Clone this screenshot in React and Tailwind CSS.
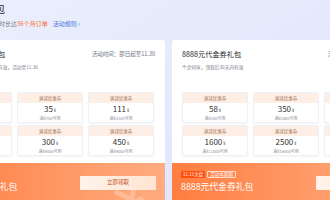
import React from 'react';

const cards = [
  {
    title: '3888元代金券礼包',
    desc: '个企同享，领取后30天内有效，活动至11.30',
    coupons: [
      { v: '15', min: '满¥300可用' },
      { v: '35', min: '满¥780可用' },
      { v: '111', min: '满¥2220可用' },
      { v: '150', min: '满¥3000可用' },
      { v: '300', min: '满¥6000可用' },
      { v: '450', min: '满¥9000可用' },
    ],
  },
  {
    title: '8888元代金券礼包',
    desc: '个企同享，领取后30天内有效',
    coupons: [
      { v: '58', min: '满¥300可用' },
      { v: '350', min: '满¥2400可用' },
      { v: '800', min: '满¥4800可用' },
      { v: '1600', min: '满¥11000可用' },
      { v: '2500', min: '满¥16800可用' },
      { v: '3500', min: '满¥23000可用' },
    ],
  },
];

const Coupon = ({ v, min }) => (
  <div className="flex flex-col overflow-hidden rounded-[2px] border border-[#eef0f5] bg-white shadow-[0_1px_2px_rgba(60,80,140,0.06)]">
    <div className="flex h-[10px] items-center justify-center bg-[#fdefe5] text-[4.5px] leading-none text-[#a8765a]">
      满减优惠券
    </div>
    <div className="flex h-[19px] flex-col items-center justify-center">
      <div className="flex items-baseline leading-none text-[#333]">
        <span className="text-[8px]">{v}</span>
        <span className="ml-[1px] text-[4px]">¥</span>
      </div>
      <div className="mt-[2.5px] text-[4px] leading-none text-[#8a8f99]">{min}</div>
    </div>
  </div>
);

const Card = ({ title, desc, coupons }) => (
  <div className="flex w-[229px] shrink-0 flex-col overflow-hidden rounded-[3px] bg-white">
    <div className="flex flex-col px-[10px] pt-[10px]">
      <div className="flex items-center justify-between">
        <span className="text-[7.2px] leading-[9px] text-[#1f2329]">{title}</span>
        <span className="text-[5.5px] leading-[9px] text-[#6b7280]">活动时间：即日起至11.30</span>
      </div>
      <div className="mt-[5px] text-[4.7px] leading-[6px] text-[#7a808a]">{desc}</div>
      <div className="mt-[22px] grid w-[208px] grid-cols-3 gap-x-[5px] gap-y-[2px]">
        {coupons.map((c) => (
          <Coupon key={c.v} {...c} />
        ))}
      </div>
    </div>
    <div className="relative mt-[7px] flex h-[42px] items-start justify-between overflow-hidden bg-gradient-to-r from-[#ff7d3f] to-[#ffac80] px-[9px] pt-[8px]">
      <svg className="absolute left-[176px] top-[18px] opacity-25" width="40" height="40" viewBox="0 0 40 40">
        <g transform="rotate(-25 20 20)" fill="none" stroke="#fff" strokeWidth="5" strokeLinecap="round">
          <path d="M10 6 L20 18 L30 6" />
          <path d="M20 18 V36" />
          <path d="M11 22 H29" />
          <path d="M11 30 H29" />
        </g>
      </svg>
      <div className="relative flex flex-col">
        <div className="flex items-center gap-[2px]">
          <span className="flex h-[7px] items-center rounded-[1px] bg-[#ff4f0f] px-[2px] text-[4.5px] leading-none text-white">11.11大促</span>
          <span className="flex h-[7px] items-center rounded-[1px] border border-white/70 px-[2px] text-[4.5px] leading-none text-white">活动本周期</span>
        </div>
        <div className="mt-[4px] text-[8.8px] leading-[10px] text-white">{title}</div>
      </div>
      <button className="relative mt-[5px] flex h-[14px] w-[76px] items-center justify-center rounded-[1px] bg-gradient-to-r from-[#fff3ea] to-[#ffe4d2] text-[5.5px] leading-none text-[#c4552a]">
        立即领取
      </button>
    </div>
  </div>
);

export default function App() {
  return (
    <div
      className="h-[200px] w-[330px] overflow-hidden bg-gradient-to-br from-[#eaeefc] to-[#dfe6fb]"
      style={{ fontFamily: '"Noto Sans CJK SC", "Noto Sans", sans-serif' }}
    >
      <div className="-ml-[37px] flex flex-col pt-[3px]">
        <div className="text-[10.5px] leading-[11px] text-[#1f2329]">专享礼包</div>
        <div className="mt-[6px] flex items-center text-[6px] leading-[7px]">
          <span className="text-[#7a808a]">代金券可抵扣时长达</span>
          <span className="text-[#ff6a2a]">36个月订单</span>
          <span className="ml-[5px] text-[#4a78e0]">活动规则 ›</span>
        </div>
      </div>
      <div className="-ml-[64px] mt-[13px] flex gap-[7px]">
        {cards.map((c) => (
          <Card key={c.title} {...c} />
        ))}
      </div>
    </div>
  );
}
